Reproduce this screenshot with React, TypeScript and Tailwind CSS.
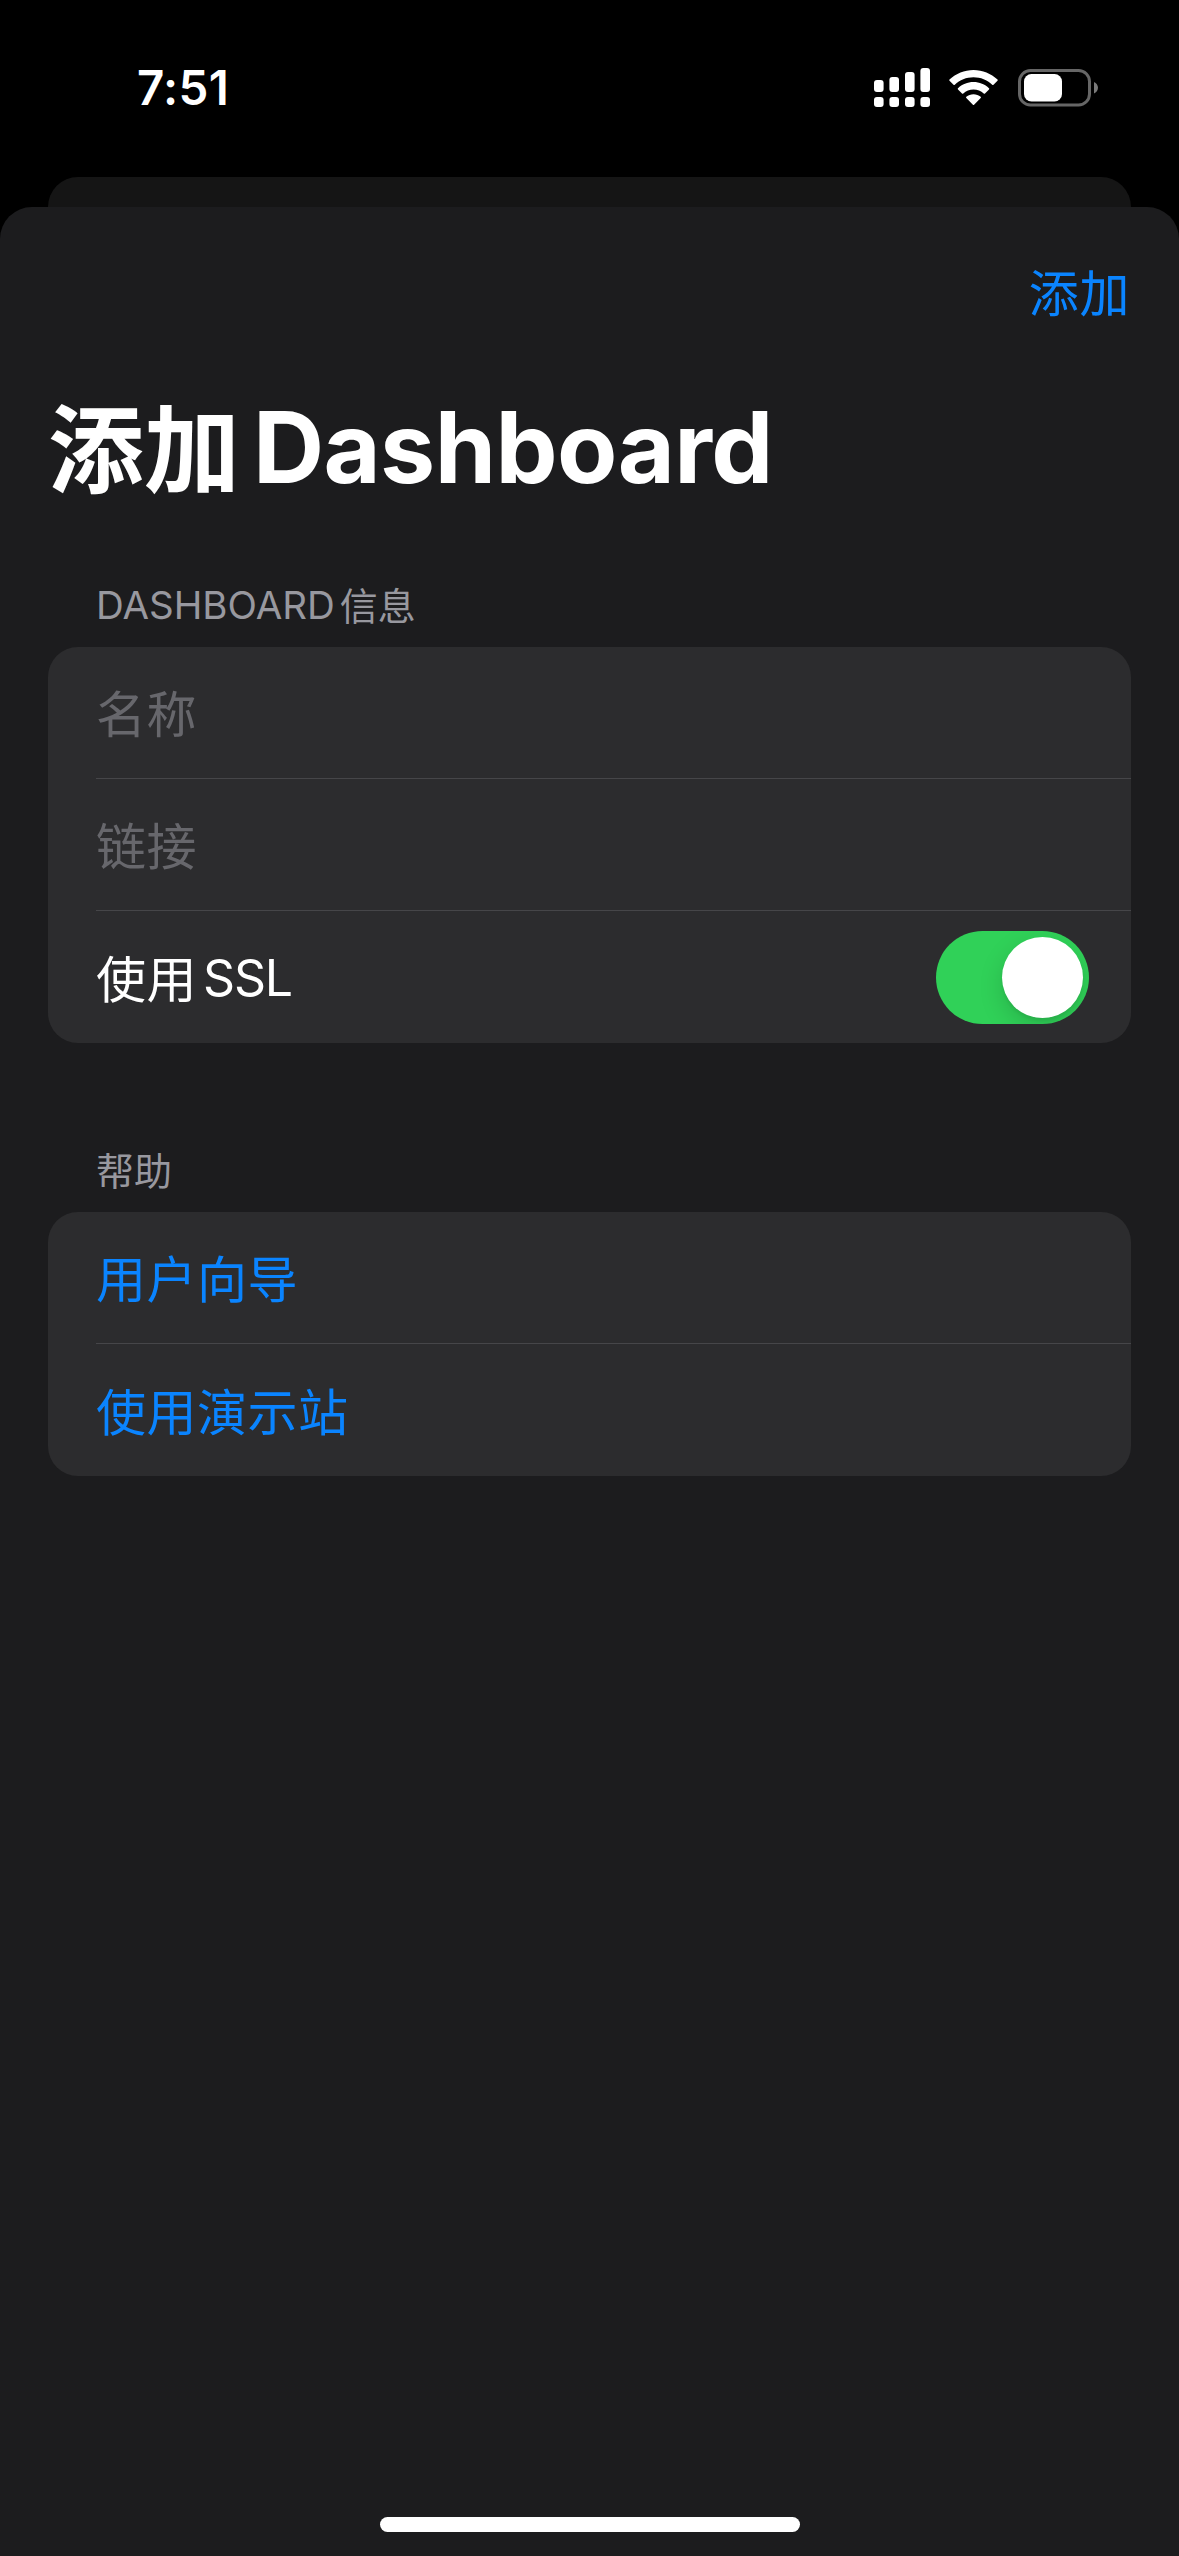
import type { ReactNode } from 'react';

function CellularIcon() {
  const xs = [0, 15.4, 31, 46.4];
  const tops = [12, 9, 4, 0];
  return (
    <svg width="56" height="39" viewBox="0 0 56 39" fill="#fff">
      {xs.map((x, i) => (
        <g key={x}>
          <rect x={x} y={tops[i]} width="9.6" height={24 - tops[i]} rx="3" />
          <rect x={x} y="29" width="9.6" height="10" rx="3" />
        </g>
      ))}
    </svg>
  );
}

function WifiIcon() {
  return (
    <svg width="49" height="36" viewBox="0 0 49 36" fill="#fff">
      <path d="M24.5 0C15.4 0 7 3.6.5 9.6c-.4.4-.4.8 0 1.200l4 4c.4.4.9.4 1.300 0C10.800 10 17.300 7.300 24.500 7.300s13.700 2.700 18.700 7.500c.4.4.9.4 1.300 0l4-4c.4-.4.4-.8 0-1.200C42 3.600 33.600 0 24.500 0z" />
      <path d="M24.500 12c-6 0-11.400 2.300-15.500 6.200-.4.4-.4.8 0 1.200l4 4c.4.4.9.4 1.300 0 2.700-2.500 6.300-4 10.200-4s7.500 1.500 10.200 4c.4.4.9.4 1.300 0l4-4c.4-.4.4-.8 0-1.200C35.900 14.300 30.500 12 24.500 12z" />
      <path d="M24.500 24.300c-2.700 0-5.200.9-7.200 2.500-.4.400-.4.800 0 1.200l6.600 6.700c.4.400.8.400 1.200 0l6.600-6.700c.4-.4.4-.8 0-1.200-2-1.600-4.500-2.500-7.200-2.500z" />
    </svg>
  );
}

function BatteryIcon() {
  return (
    <svg width="81" height="38" viewBox="0 0 81 38">
      <rect x="1.500" y="1.500" width="70" height="34.500" rx="11" fill="none" stroke="#666" strokeWidth="3" />
      <rect x="6" y="5" width="38" height="27.500" rx="7.500" fill="#fff" />
      <path d="M76 13c2.300 1 4 3.300 4 5.800s-1.700 4.800-4 5.800z" fill="#7a7a7a" />
    </svg>
  );
}

function StatusBar() {
  return (
    <header className="flex h-[177px] items-start justify-between pl-[137px] pr-20">
      <div className="pt-[59px] text-[47.500px] font-semibold leading-[58px] tracking-[0.3px] text-white">7:51</div>
      <div className="flex items-start pt-[68px]">
        <CellularIcon />
        <div className="pl-[19px] pt-[2px]">
          <WifiIcon />
        </div>
        <div className="pl-[20px] pt-px">
          <BatteryIcon />
        </div>
      </div>
    </header>
  );
}

function SectionHeader({ children }: { children: ReactNode }) {
  return <h2 className="flex h-[47px] items-center pl-12 text-[38.500px] leading-[47px] text-[#98989f]">{children}</h2>;
}

function Group({ children }: { children: ReactNode }) {
  return <div className="overflow-hidden rounded-[30px] bg-[#2c2c2e] pl-12">{children}</div>;
}

function Row({ children, last, className }: { children: ReactNode; last?: boolean; className: string }) {
  return (
    <div className={`flex h-[132px] items-center justify-between border-[#464649] pr-[42px] text-[50px] leading-[60px] tracking-[0.5px] ${last ? '' : 'border-b'} ${className}`}>
      {children}
    </div>
  );
}

function Label({ children }: { children: ReactNode }) {
  return <span className="pt-[5px]">{children}</span>;
}

function Toggle() {
  return (
    <button className="flex h-[93px] w-[153px] items-center justify-end overflow-hidden rounded-full bg-[#30d158] pr-1.5" aria-label="SSL">
      <span className="size-[81px] rounded-full bg-white shadow-[0_9px_24px_rgba(0,0,0,0.15),0_3px_3px_rgba(0,0,0,0.06)]" />
    </button>
  );
}

export default function App() {
  return (
    <div className="flex h-[2556px] w-[1179px] flex-col overflow-hidden bg-black font-['Inter','Noto_Sans_CJK_SC',sans-serif]">
      <StatusBar />
      <div className="mx-12 h-[30px] rounded-t-[30px] bg-[#151515]" />
      <main className="flex flex-1 flex-col rounded-t-[32px] bg-[#1c1c1e] px-12">
        <div className="flex justify-end pr-px pt-[57px]">
          <button className="text-[50px] leading-[60px] tracking-[0.6px] text-[#0a84ff]">添加</button>
        </div>
        <h1 className="flex items-start pt-[64px] font-bold leading-[120px] text-white">
          <span className="pt-0.5 text-[96px]">添加</span>
          <span className="pl-[13px] text-[98.500px] tracking-[-0.6px]">Dashboard</span>
        </h1>
        <section className="pt-[72px]">
          <SectionHeader>
            <span>DASHBOARD</span>
            <span className="pl-[5px] pt-px text-[38px]">信息</span>
          </SectionHeader>
          <div className="pt-[18px]">
            <Group>
              <Row className="text-[#67676c]">
                <Label>名称</Label>
              </Row>
              <Row className="text-[#67676c]">
                <Label>链接</Label>
              </Row>
              <Row className="text-white" last>
                <div className="flex items-center">
                  <Label>使用</Label>
                  <span className="pl-[6px] pt-0.5 tracking-[-1.200px]">SSL</span>
                </div>
                <Toggle />
              </Row>
            </Group>
          </div>
        </section>
        <section className="pt-[104px]">
          <SectionHeader>
            <span className="pt-px text-[38px]">帮助</span>
          </SectionHeader>
          <div className="pt-[18px]">
            <Group>
              <Row className="text-[#0a84ff]">
                <Label>用户向导</Label>
              </Row>
              <Row className="text-[#0a84ff]" last>
                <Label>使用演示站</Label>
              </Row>
            </Group>
          </div>
        </section>
        <div className="mt-auto flex justify-center pb-6">
          <div className="h-[15px] w-[420px] rounded-full bg-white" />
        </div>
      </main>
    </div>
  );
}
